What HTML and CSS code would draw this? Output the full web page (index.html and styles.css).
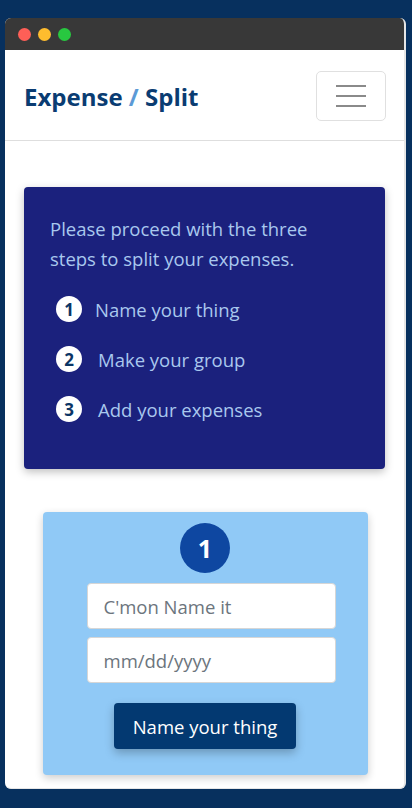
FILE: index.html
```html
<!DOCTYPE html>
<html>
<head>
<meta charset="utf-8">
<link rel="stylesheet" href="styles.css">
</head>
<body>
<div class="window">
  <div class="titlebar">
    <span class="dot red"></span><span class="dot yellow"></span><span class="dot green"></span>
  </div>
  <nav class="navbar">
    <div class="brand">Expense <span class="slash">/</span> Split</div>
    <button class="toggler" aria-label="menu">
      <span class="bar"></span><span class="bar"></span><span class="bar"></span>
    </button>
  </nav>
  <main class="main">
    <section class="intro">
      <p class="intro-text">Please proceed with the three steps to split your expenses.</p>
      <ol class="steps">
        <li class="step"><span class="num">1</span><span class="label">Name your thing</span></li>
        <li class="step"><span class="num">2</span><span class="label wide">Make your group</span></li>
        <li class="step"><span class="num">3</span><span class="label wide">Add your expenses</span></li>
      </ol>
    </section>
    <section class="form-card">
      <div class="big-num">1</div>
      <input class="field" type="text" placeholder="C'mon Name it">
      <input class="field" type="text" placeholder="mm/dd/yyyy">
      <button class="submit">Name your thing</button>
    </section>
  </main>
</div>
</body>
</html>
```

FILE: styles.css
```css
* { box-sizing: border-box; }
html, body { margin: 0; padding: 0; }
body {
  background: #07305e;
  font-family: "Open Sans", "Noto Sans", sans-serif;
  width: 412px;
  height: 808px;
  overflow: hidden;
}
.window {
  margin: 18px 6px 0 5px;
  width: 401px;
  height: 771px;
  background: #fff;
  border-radius: 6px;
  border-right: 2px solid #e6e6e6;
  border-bottom: 1px solid #e6e6e6;
  overflow: hidden;
  display: flex;
  flex-direction: column;
}
.titlebar {
  height: 32px;
  flex-shrink: 0;
  background: #383838;
  display: flex;
  align-items: center;
  padding-left: 13px;
  gap: 7px;
}
.dot { width: 13px; height: 13px; border-radius: 50%; display: block; }
.red { background: #fe5f57; }
.yellow { background: #febc2e; }
.green { background: #28c840; }
.navbar {
  height: 91px;
  flex-shrink: 0;
  border-bottom: 1px solid #dedede;
  display: flex;
  align-items: center;
  justify-content: space-between;
  padding: 0 18px 0 19px;
}
.brand {
  font-size: 24px;
  font-weight: 700;
  color: #0a3c72;
  margin-top: 2px;
}
.slash { color: #5c9ad6; }
.toggler {
  width: 70px;
  height: 50px;
  background: #fff;
  border: 1px solid #e0e0e0;
  border-radius: 5px;
  display: flex;
  flex-direction: column;
  align-items: center;
  justify-content: center;
  gap: 8px;
  padding: 0;
  margin-top: 2px;
}
.bar { width: 30px; height: 2px; background: #8a8a8a; display: block; }
.main {
  display: flex;
  flex-direction: column;
  align-items: center;
  padding: 46px 19px 0;
  gap: 43px;
}
.intro {
  width: 361px;
  height: 282px;
  flex-shrink: 0;
  background: #1b217d;
  border-radius: 4px;
  box-shadow: 0 3px 8px rgba(0,0,0,0.25);
  padding: 27px 26px 0;
  color: #a9c8ee;
}
.intro-text {
  margin: 0;
  font-size: 18.5px;
  line-height: 30px;
  max-width: 285px;
}
.steps {
  list-style: none;
  margin: 22px 0 0;
  padding: 0 0 0 6px;
  display: flex;
  flex-direction: column;
  gap: 24px;
}
.step {
  display: flex;
  align-items: center;
  height: 26px;
  font-size: 18.5px;
}
.num {
  width: 26px;
  height: 26px;
  border-radius: 50%;
  background: #fff;
  color: #0b3566;
  font-weight: 700;
  font-size: 17px;
  display: flex;
  align-items: center;
  justify-content: center;
  margin-right: 13px;
}
.label.wide { margin-left: 3px; }
.form-card {
  width: 325px;
  height: 263px;
  flex-shrink: 0;
  margin-left: 1px;
  background: #90c9f6;
  border-radius: 4px;
  box-shadow: 0 3px 8px rgba(0,0,0,0.2);
  display: flex;
  flex-direction: column;
  align-items: center;
  padding-top: 11px;
}
.big-num {
  width: 50px;
  height: 50px;
  border-radius: 50%;
  background: #0e47a1;
  color: #fff;
  font-size: 25px;
  font-weight: 700;
  display: flex;
  align-items: center;
  justify-content: center;
  margin-bottom: 10px;
}
.field {
  width: 249px;
  height: 46px;
  margin-left: 12px;
  border: 1px solid #d6d6d6;
  border-radius: 4px;
  background: #fff;
  font-family: inherit;
  font-size: 18.5px;
  padding: 0 16px;
  margin-bottom: 8px;
  color: #495057;
}
.field::placeholder { color: #6c757d; }
.submit {
  margin-top: 12px;
  width: 182px;
  height: 46px;
  background: #033971;
  color: #fff;
  border: none;
  border-radius: 4px;
  font-family: inherit;
  font-size: 18.5px;
  box-shadow: 0 4px 10px rgba(0,0,0,0.25);
}
```
